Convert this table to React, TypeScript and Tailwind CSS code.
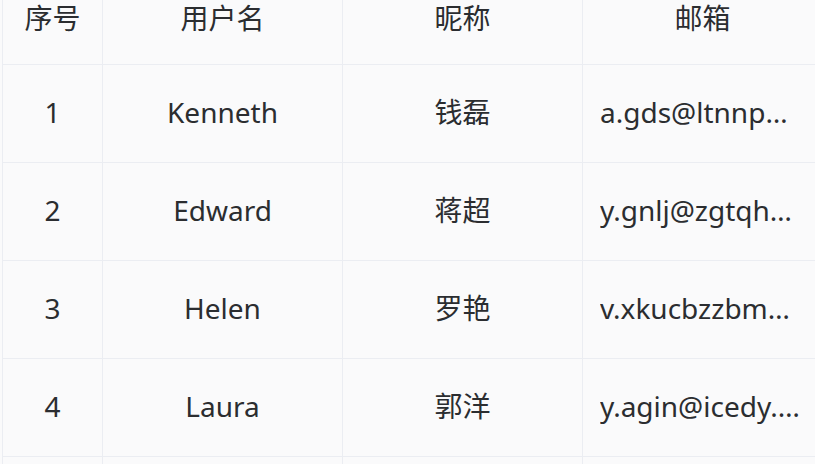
const rows = [
  { id: 1, name: 'Kenneth', nick: '钱磊', email: 'a.gds@ltnnpmq.gov' },
  { id: 2, name: 'Edward', nick: '蒋超', email: 'y.gnlj@zgtqhbw.net' },
  { id: 3, name: 'Helen', nick: '罗艳', email: 'v.xkucbzzbmw@rxsd.edu' },
  { id: 4, name: 'Laura', nick: '郭洋', email: 'y.agin@icedy.org' },
  { id: 5, name: 'Mark', nick: '王芳', email: 'k.uwqe@pnxo.com' },
];

const cols = ['w-[100px]', 'w-[240px]', 'w-[240px]', 'w-[240px]'];

const App = () => {
  return (
    <div
      className="w-[815px] h-[464px] overflow-hidden bg-[#fafafb] pl-[2px] text-[#2b2d30]"
      style={{ fontFamily: '"Noto Sans", "Noto Sans CJK SC", sans-serif' }}
    >
      <div className="w-[822px] text-[28px]">
        {/* header */}
        <div className="flex h-[65px] border-b border-[#ebedf2]">
          {['序号', '用户名', '昵称', '邮箱'].map((h, i) => (
            <div
              key={h}
              className={`${cols[i]} shrink-0 border-l border-[#ebedf2] text-center leading-[36px]`}
            >
              {h}
            </div>
          ))}
        </div>
        {rows.map(r => (
          <div key={r.id} className="flex h-[98px] border-b border-[#ebedf2]">
            <div className="w-[100px] shrink-0 border-l border-[#ebedf2] flex items-center justify-center pb-[3px]">
              {r.id}
            </div>
            <div className="w-[240px] shrink-0 border-l border-[#ebedf2] flex items-center justify-center pb-[3px]">
              {r.name}
            </div>
            <div className="w-[240px] shrink-0 border-l border-[#ebedf2] flex items-center justify-center pb-[3px]">
              {r.nick}
            </div>
            <div className="w-[240px] shrink-0 border-l border-[#ebedf2] flex items-center px-[17px] pb-[3px]">
              <span className="truncate block w-full text-center">{r.email}</span>
            </div>
          </div>
        ))}
      </div>
    </div>
  );
};

export default App;
